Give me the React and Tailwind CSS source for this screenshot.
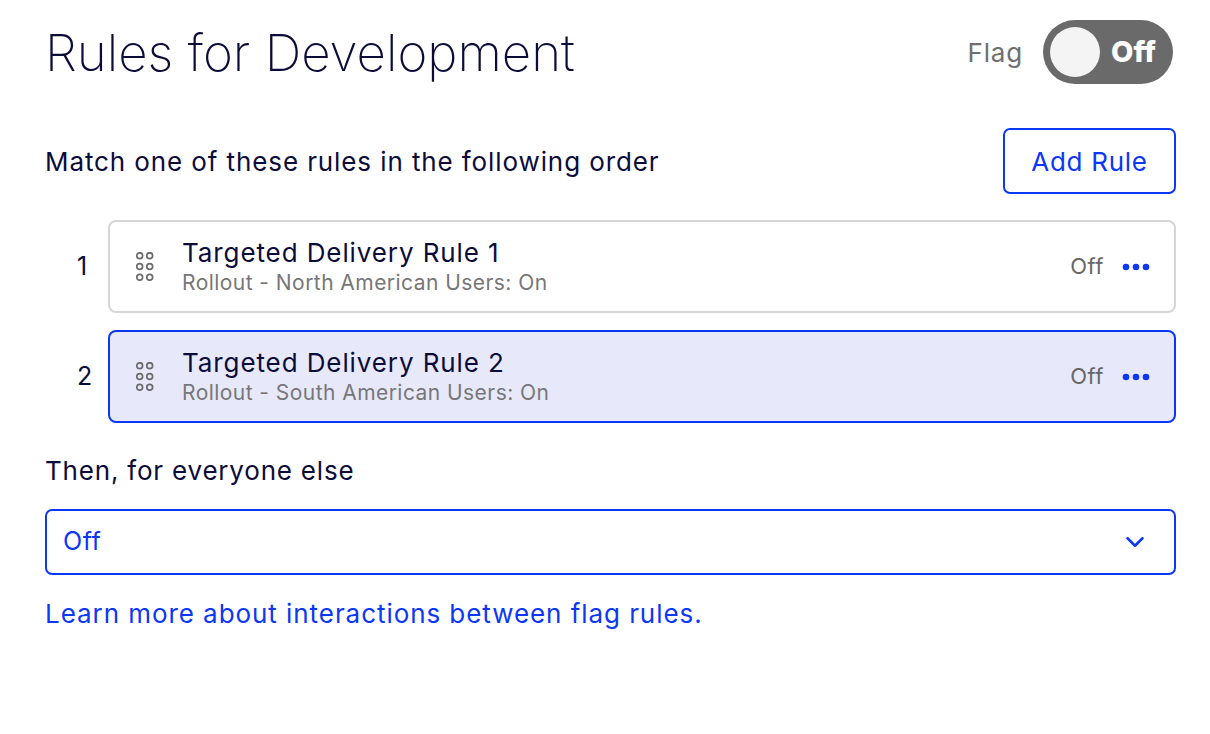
import { ChevronDown } from "lucide-react";

function Grip() {
  return (
    <svg width="21" height="29" viewBox="0 0 21 29" className="text-[#6b6b6b]">
      {[3.7, 14.5, 25.3].map((y) =>
        [3.7, 13.7].map((x) => (
          <circle key={`${x}-${y}`} cx={x} cy={y} r="2.9" fill="none" stroke="currentColor" strokeWidth="1.7" />
        ))
      )}
    </svg>
  );
}

function Dots() {
  return (
    <svg width="28" height="8" viewBox="0 0 28 8">
      <circle cx="4" cy="4" r="3.3" fill="#0b37f5" />
      <circle cx="14" cy="4" r="3.3" fill="#0b37f5" />
      <circle cx="24" cy="4" r="3.3" fill="#0b37f5" />
    </svg>
  );
}

const rules = [
  { n: 1, title: "Targeted Delivery Rule 1", sub: "Rollout - North American Users: On", active: false },
  { n: 2, title: "Targeted Delivery Rule 2", sub: "Rollout - South American Users: On", active: true },
];

export default function App() {
  return (
    <div
      className="min-h-screen bg-white pl-[45px] pr-[34px] pt-[20px] text-[#0c0c3a]"
      style={{ fontFamily: "Inter, 'Noto Sans', sans-serif" }}
    >
      {/* header */}
      <div className="flex items-center justify-between">
        <h1 className="text-[51px] font-extralight leading-none">Rules for Development</h1>
        <div className="flex items-center gap-[20px] pr-[3px]">
          <span className="text-[26px] tracking-[0.8px] text-[#6f6f6f]">Flag</span>
          <div className="flex h-[64px] w-[130px] items-center rounded-full bg-[#6a6a6a] pl-[7px] pr-[17px]">
            <div className="h-[50px] w-[50px] rounded-full bg-[#f4f4f4]" />
            <span className="ml-auto text-[29px] font-extrabold text-white">Off</span>
          </div>
        </div>
      </div>

      {/* match row */}
      <div className="mt-[44px] flex items-center justify-between">
        <p className="text-[26px] tracking-[0.9px]">Match one of these rules in the following order</p>
        <button className="h-[66px] w-[173px] rounded-[7px] border-2 border-[#0b37f5] text-[26px] tracking-[0.7px] text-[#0b37f5]">
          Add Rule
        </button>
      </div>

      {/* rules */}
      <div className="mt-[26px] flex flex-col gap-[17px]">
        {rules.map((r) => (
          <div key={r.n} className="flex items-center">
            <span className="w-[63px] pl-[32px] text-[25px]">{r.n}</span>
            <div
              className={
                r.active
                  ? "flex h-[93px] flex-1 items-center rounded-[8px] border-2 border-[#0b37f5] bg-[#e7e9fb] pl-[26px] pr-[24px]"
                  : "flex h-[93px] flex-1 items-center rounded-[8px] border-2 border-[#d6d6d6] bg-white pl-[26px] pr-[24px]"
              }
            >
              <Grip />
              <div className="ml-[25px] flex flex-col">
                <span className="text-[26px] leading-[32px] tracking-[0.9px]">{r.title}</span>
                <span className="text-[21px] leading-[28px] tracking-[0.45px] text-[#777]">{r.sub}</span>
              </div>
              <span className="ml-auto text-[22px] tracking-[0.5px] text-[#666]">Off</span>
              <div className="ml-[18px]">
                <Dots />
              </div>
            </div>
          </div>
        ))}
      </div>

      {/* everyone else */}
      <p className="mt-[28px] text-[26px] leading-[39px] tracking-[0.8px]">Then, for everyone else</p>
      <div className="mt-[19px] flex h-[66px] items-center justify-between rounded-[7px] border-2 border-[#0b37f5] pl-[16px] pr-[24px]">
        <span className="text-[25px] tracking-[0.6px] text-[#0b37f5]">Off</span>
        <ChevronDown size={30} strokeWidth={2} className="text-[#0b37f5]" />
      </div>
      <a className="mt-[19px] block text-[26px] leading-[39px] tracking-[0.94px] text-[#0b37f5]">
        Learn more about interactions between flag rules.
      </a>
    </div>
  );
}
